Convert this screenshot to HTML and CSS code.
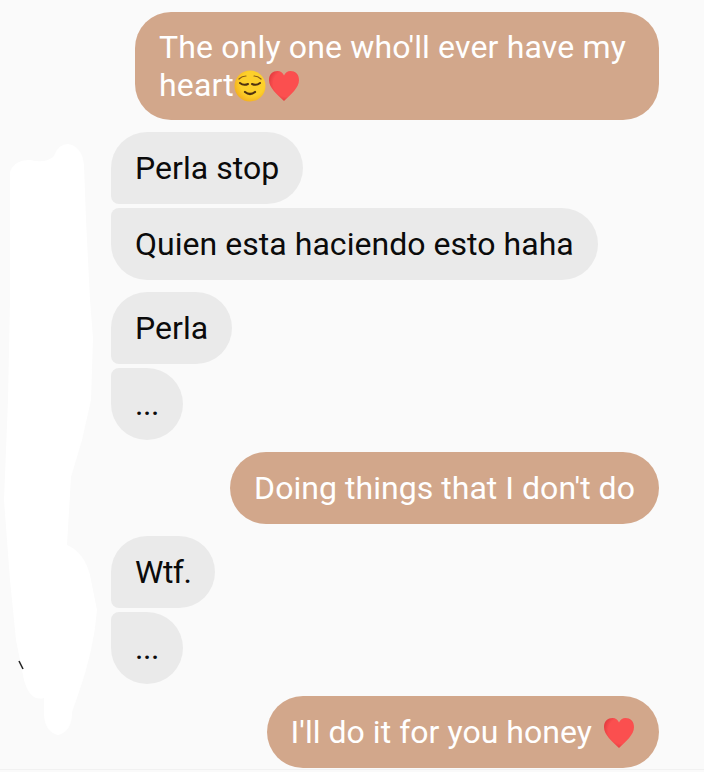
FILE: index.html
```html
<!DOCTYPE html>
<html lang="en">
<head>
    <meta charset="UTF-8">
    <meta name="viewport" content="width=device-width, initial-scale=1.0">
    <title>Messages</title>
    <link rel="stylesheet" href="styles.css">
</head>
<body>

<svg class="defs" width="0" height="0">
    <defs>
        <radialGradient id="heartFill" cx="0.58" cy="0.42" r="0.62">
            <stop offset="0.7" stop-color="#fb4f4f"/>
            <stop offset="1" stop-color="#e23a3e"/>
        </radialGradient>
        <radialGradient id="faceFill" cx="0.58" cy="0.42" r="0.65">
            <stop offset="0.6" stop-color="#fdd02a"/>
            <stop offset="1" stop-color="#f3ab1c"/>
        </radialGradient>
    </defs>
</svg>

<div class="chat">
    <div class="group group-out">
        <div class="bubble out bubble-wide">The only one who'll ever have my heart<svg class="emoji emoji-face" viewBox="0 0 32 32"><circle cx="16" cy="16" r="15.500" fill="url(#faceFill)"/><path d="M5 9q3-3 7-3M20 6q4 0 7 3" fill="none" stroke="#8a5f18" stroke-width="1.200" stroke-linecap="round"/><path d="M6 13q3.500 3 8 1M18 14q4.500 2 8-1" fill="none" stroke="#4f3210" stroke-width="2" stroke-linecap="round"/><path d="M11 22q5 4 10 0" fill="none" stroke="#4f3210" stroke-width="2.200" stroke-linecap="round"/></svg><svg class="emoji" viewBox="0 0 32 32"><path d="M16 31C9 24 1 18 1 10C1 4 5 1 9.500 1C12.500 1 15 3 16 5.500C17 3 19.500 1 22.500 1C27 1 31 4 31 10C31 18 23 24 16 31Z" fill="url(#heartFill)"/></svg></div>
    </div>

    <div class="group">
        <div class="bubble in first">Perla stop</div>
        <div class="bubble in last">Quien esta haciendo esto haha</div>
    </div>

    <div class="group">
        <div class="bubble in first">Perla</div>
        <div class="bubble in last bubble-tight">...</div>
    </div>

    <div class="group group-out">
        <div class="bubble out">Doing things that I don't do</div>
    </div>

    <div class="group">
        <div class="bubble in first bubble-tight">Wtf.</div>
        <div class="bubble in last bubble-tight">...</div>
    </div>

    <div class="group group-out">
        <div class="bubble out">I'll do it for you honey <svg class="emoji emoji-end" viewBox="0 0 32 32"><path d="M16 31C9 24 1 18 1 10C1 4 5 1 9.500 1C12.500 1 15 3 16 5.500C17 3 19.500 1 22.500 1C27 1 31 4 31 10C31 18 23 24 16 31Z" fill="url(#heartFill)"/></svg></div>
    </div>
</div>

<svg class="scribble" viewBox="0 0 110 772">
    <path d="M10 172Q14 160 30 160Q46 164 54 156Q58 144 68 144Q82 146 84 165L86 220L90 300L93 338L91 400L82 440L71 477L67 545Q84 552 90 575L97 610Q94 650 78 695L72 712Q72 732 58 735Q44 732 44 712L44 698Q30 702 24 680L16 640L10 580L4 500L8 400L10 300Z" fill="#ffffff"/>
    <path d="M19 661L23 669" fill="none" stroke="#222" stroke-width="1.500"/>
</svg>

</body>
</html>
```

FILE: styles.css
```css
html, body {
    height: 100%;
}

body {
    margin: 0;
    background-color: #fafafa;
    font-family: Roboto, Arial, sans-serif;
    overflow: hidden;
    position: relative;
}

.defs {
    position: absolute;
}

.chat {
    box-sizing: border-box;
    height: 770px;
    display: flex;
    flex-direction: column;
    gap: 12px;
    padding: 12px 45px 0 111px;
    border-bottom: 1px solid #f1f1f1;
}

.group {
    display: flex;
    flex-direction: column;
    align-items: flex-start;
    gap: 4px;
}

.group-out {
    align-items: flex-end;
}

.bubble {
    box-sizing: border-box;
    min-height: 72px;
    padding: 17px 24px;
    border-radius: 36px;
    font-size: 32px;
    line-height: 38px;
    letter-spacing: 0.04px;
}

.bubble-wide {
    width: 524px;
    padding: 16px 24px;
    letter-spacing: 0.15px;
}

.bubble-tight {
    letter-spacing: -0.5px;
}

.in {
    background-color: #eaeaea;
    color: #0b0b0b;
}

.out {
    background-color: #d2a78b;
    color: #ffffff;
}

.first {
    border-bottom-left-radius: 8px;
}

.last {
    border-top-left-radius: 8px;
}

.emoji {
    width: 32px;
    height: 32px;
    vertical-align: -6px;
}

.emoji-face {
    margin-right: 2px;
}

.emoji-end {
    margin-left: 3px;
}

.scribble {
    position: absolute;
    left: 0;
    top: 0;
    width: 110px;
    height: 772px;
}
```
